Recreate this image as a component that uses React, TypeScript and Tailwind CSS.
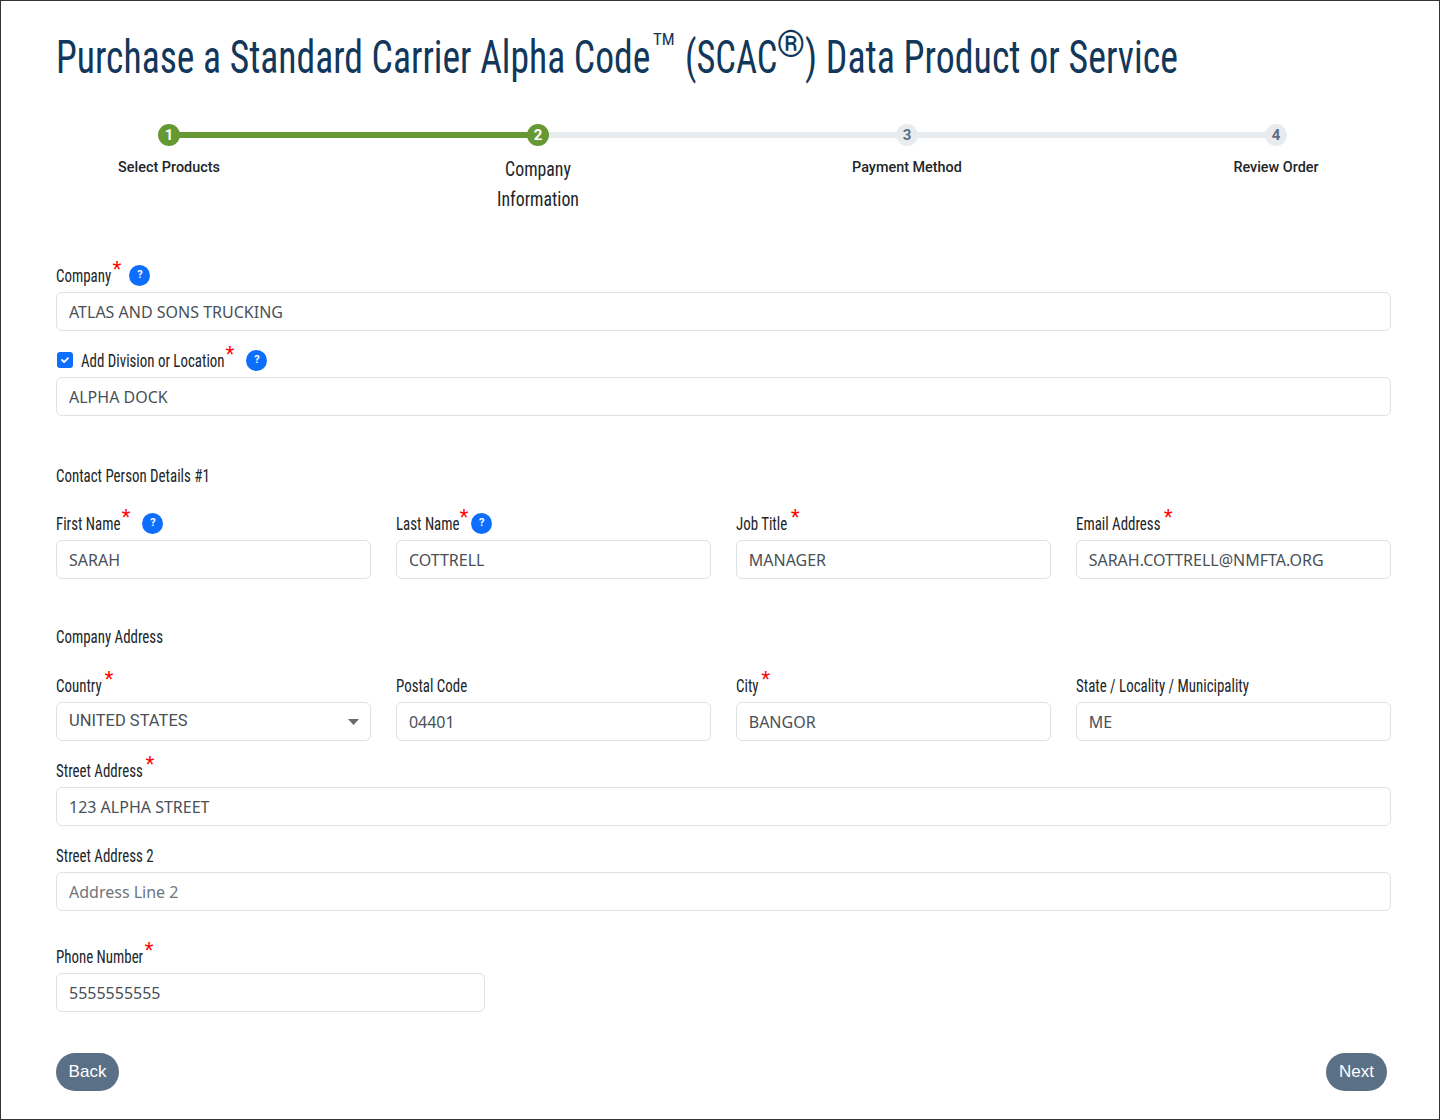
import React from 'react';

const narrow = "font-['Roboto_Condensed','Roboto',sans-serif]";

const steps = [
    { num: 1, label: 'Select Products', done: true },
    { num: 2, label: 'Company Information', done: true, current: true },
    { num: 3, label: 'Payment Method', done: false },
    { num: 4, label: 'Review Order', done: false },
];

// the installed condensed face is wider than the one in the design, so squeeze it
const Cond = ({ width, scale = 'scale-x-[.785]', children }: { width: string; scale?: string; children: React.ReactNode }) => (
    <span className={`inline-block shrink-0 whitespace-nowrap ${width}`}>
        <span className={`inline-block origin-left ${scale}`}>{children}</span>
    </span>
);

const Help = ({ className = '' }: { className?: string }) => (
    <span className={`mb-[2px] flex h-[21px] w-[21px] shrink-0 items-center justify-center rounded-full bg-[#0d6efd] font-['Roboto',sans-serif] text-[11px] font-bold text-white ${className}`}>?</span>
);

type LabelProps = { text: string; width: string; required?: boolean; starGap?: string; help?: boolean; helpGap?: string };

const Label = ({ text, width, required, starGap = 'ml-[1.5px]', help, helpGap = 'ml-[8px]' }: LabelProps) => (
    <div className="flex h-6 items-center">
        <span className={`${narrow} text-[19px] leading-6 text-[#212529]`}>
            <Cond width={width}>{text}</Cond>
        </span>
        {required && <span className={`${starGap} h-5 -translate-y-[8px] font-['Liberation_Sans',sans-serif] text-[23px] leading-6 text-[#ff0000]`}>*</span>}
        {help && <Help className={helpGap} />}
    </div>
);

const Input = ({ value, placeholder }: { value?: string; placeholder?: string }) => (
    <input
        readOnly
        value={value}
        placeholder={placeholder}
        className="block h-[39px] w-full rounded-md border-[1.5px] border-[#dee2e6] bg-white px-3 font-['Noto_Sans',sans-serif] text-base text-[#495057] outline-none placeholder:text-[#6c757d]"
    />
);

const Field = ({ value, placeholder, ...label }: LabelProps & { value?: string; placeholder?: string }) => (
    <div className="flex flex-col gap-1">
        <Label {...label} />
        <Input value={value} placeholder={placeholder} />
    </div>
);

const Stepper = () => (
    <div className="mt-[37px] grid grid-cols-[210px_210px_210px_210px] gap-x-[159px] pl-[8px]">
        {steps.map((step, i) => (
            <div key={step.num} className="relative flex flex-col items-center">
                {i < steps.length - 1 && (
                    <div className={`absolute left-[105px] top-[8px] h-[6px] w-[369px] ${steps[i + 1].done ? 'bg-[#669933]' : 'bg-[#e9ecef]'}`} />
                )}
                <div className={`relative flex h-[22px] w-[22px] items-center justify-center rounded-full font-['Roboto',sans-serif] text-[15px] font-bold ${step.done ? 'bg-[#669933] text-white' : 'bg-[#e9ecef] text-[#5b6f86]'}`}>
                    {step.num}
                </div>
                {step.current ? (
                    <div className={`${narrow} mt-[8px] w-[100px] scale-x-[.89] text-center text-[20px] leading-[30px] text-[#212529]`}>{step.label}</div>
                ) : (
                    <div className="mt-[12px] font-['Roboto',sans-serif] text-[14.4px] font-medium leading-5 text-[#212529]">{step.label}</div>
                )}
            </div>
        ))}
    </div>
);

export default function App() {
    return (
        <div className="h-[1120px] w-[1440px] overflow-hidden border border-[#333333] bg-white pl-[55px] pr-[48px] pt-[26px]">
            <h1 className={`${narrow} flex h-[60px] items-center whitespace-nowrap text-[47px] font-normal leading-[60px] text-[#12375a]`}>
                <Cond width="w-[597px]" scale="scale-x-[.80]">Purchase a Standard Carrier Alpha Code</Cond>
                <span className="-translate-y-[18px] text-[17px] leading-none">TM</span>
                <Cond width="w-[92px] ml-[10px]" scale="scale-x-[.775]">(SCAC</Cond>
                <span className="w-[28px] -translate-y-[12px] text-[36px] leading-none">®</span>
                <Cond width="w-[372px]" scale="scale-x-[.806]">) Data Product or Service</Cond>
            </h1>

            <Stepper />

            <div className="mt-[50px]">
                <Field text="Company" width="w-[55px]" required help helpGap="ml-[8px]" value="ATLAS AND SONS TRUCKING" />

                <div className="mt-[18px] flex flex-col gap-1">
                    <div className="flex h-6 items-center">
                        <span className="mb-[2px] ml-[1px] mr-[8px] flex h-[16px] w-[16px] items-center justify-center rounded-[3px] bg-[#0d6efd]">
                            <svg width="12" height="12" viewBox="0 0 20 20" fill="none">
                                <path d="M5 10l3.5 3.5L15 7" stroke="#ffffff" strokeWidth="3" strokeLinecap="round" strokeLinejoin="round" />
                            </svg>
                        </span>
                        <Label text="Add Division or Location" width="w-[143px]" required help helpGap="ml-[12px]" />
                    </div>
                    <Input value="ALPHA DOCK" />
                </div>

                <div className={`${narrow} mt-[48px] h-6 text-[19px] leading-6 text-[#212529]`}>
                    <Cond width="w-[153px]">Contact Person Details #1</Cond>
                </div>
                <div className="mt-6 grid grid-cols-4 gap-x-[24.5px]">
                    <Field text="First Name" width="w-[64px]" required help helpGap="ml-[12px]" value="SARAH" />
                    <Field text="Last Name" width="w-[62px]" required help helpGap="ml-[3px]" value="COTTRELL" />
                    <Field text="Job Title" width="w-[49px]" required starGap="ml-[6px]" value="MANAGER" />
                    <Field text="Email Address" width="w-[83px]" required starGap="ml-[5px]" value="SARAH.COTTRELL@NMFTA.ORG" />
                </div>

                <div className={`${narrow} mt-[46px] h-6 text-[19px] leading-6 text-[#212529]`}>
                    <Cond width="w-[106px]">Company Address</Cond>
                </div>
                <div className="mt-[25px] grid grid-cols-4 gap-x-[24.5px]">
                    <div className="flex flex-col gap-1">
                        <Label text="Country" width="w-[47px]" required />
                        <div className="relative">
                            <select className="block h-[39px] w-full appearance-none rounded-md border-[1.5px] border-[#dee2e6] bg-white px-3 font-['Roboto',sans-serif] text-[16.5px] text-[#495057] outline-none">
                                <option>UNITED STATES</option>
                            </select>
                            <svg className="absolute right-[12px] top-[17px]" width="11" height="6" viewBox="0 0 11 6">
                                <path d="M0 0h11L5.5 6z" fill="#6b6b6b" />
                            </svg>
                        </div>
                    </div>
                    <Field text="Postal Code" width="w-[70px]" value="04401" />
                    <Field text="City" width="w-[24px]" required value="BANGOR" />
                    <Field text="State / Locality / Municipality" width="w-[178px]" value="ME" />
                </div>

                <div className="mt-[18px]">
                    <Field text="Street Address" width="w-[88px]" required value="123 ALPHA STREET" />
                </div>
                <div className="mt-[18px]">
                    <Field text="Street Address 2" width="w-[100px]" placeholder="Address Line 2" />
                </div>
                <div className="mt-[34px] w-[429px]">
                    <Field text="Phone Number" width="w-[87px]" required value="5555555555" />
                </div>

                <div className="mt-[41px] flex justify-between pr-[4px]">
                    <button className="h-[38px] w-[63px] rounded-full bg-[#5a7086] font-['Liberation_Sans',sans-serif] text-[17px] text-white">Back</button>
                    <button className="h-[38px] w-[61px] rounded-full bg-[#5a7086] font-['Liberation_Sans',sans-serif] text-[17px] text-white">Next</button>
                </div>
            </div>
        </div>
    );
}
